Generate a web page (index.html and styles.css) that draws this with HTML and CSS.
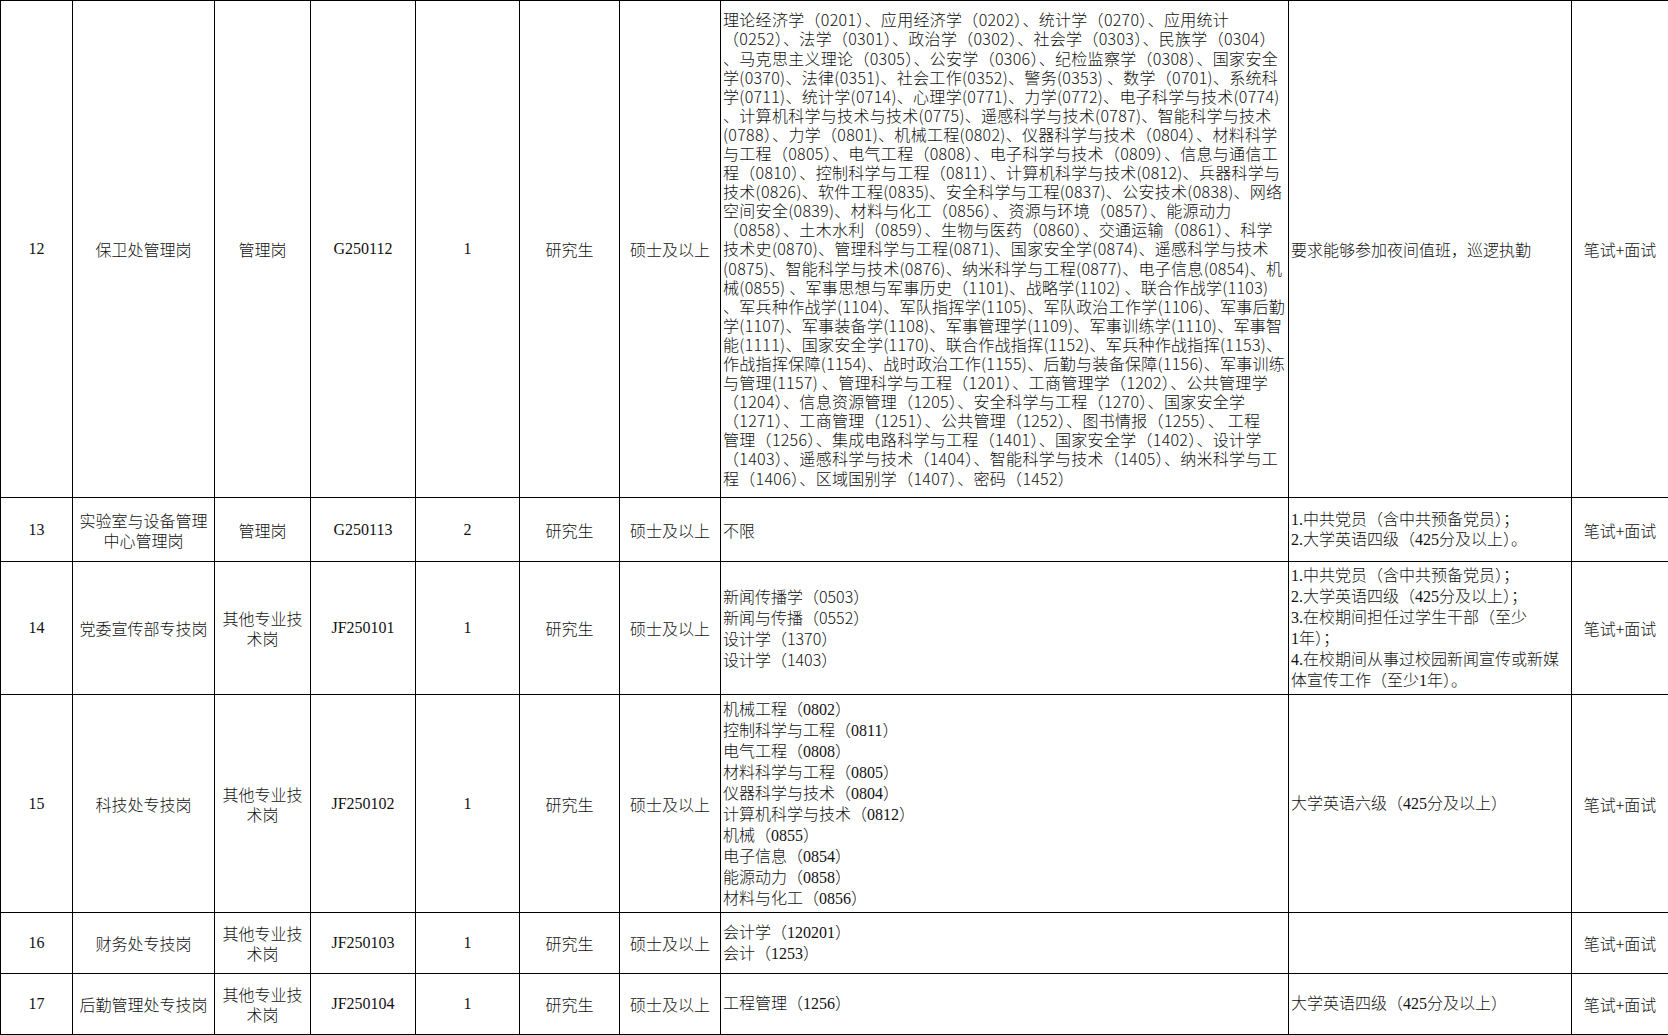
FILE: index.html
```html
<!DOCTYPE html>
<html lang="zh-CN">
<head>
<meta charset="utf-8">
<title>岗位表</title>
<link rel="stylesheet" href="styles.css">
</head>
<body>
<table class="jobs">
  <colgroup>
    <col class="w-no">
    <col class="w-dept">
    <col class="w-type">
    <col class="w-code">
    <col class="w-count">
    <col class="w-edu">
    <col class="w-deg">
    <col class="w-major">
    <col class="w-other">
    <col class="w-exam">
  </colgroup>
  <tbody>
    <tr class="r12">
      <td class="ctr serif">12</td>
      <td class="ctr">保卫处管理岗</td>
      <td class="ctr">管理岗</td>
      <td class="ctr serif">G250112</td>
      <td class="ctr serif">1</td>
      <td class="ctr">研究生</td>
      <td class="ctr">硕士及以上</td>
      <td class="left dense">理论经济学（0201）、应用经济学（0202）、统计学（0270）、应用统计<br>（0252）、法学（0301）、政治学（0302）、社会学（0303）、民族学（0304）<br>、马克思主义理论（0305）、公安学（0306）、纪检监察学（0308）、国家安全<br>学(0370)、法律(0351)、社会工作(0352)、警务(0353) 、数学（0701)、系统科<br>学(0711)、统计学(0714)、心理学(0771)、力学(0772)、电子科学与技术(0774)<br>、计算机科学与技术与技术(0775)、遥感科学与技术(0787)、智能科学与技术<br>(0788）、力学（0801)、机械工程(0802)、仪器科学与技术（0804）、材料科学<br>与工程（0805）、电气工程（0808）、电子科学与技术（0809）、信息与通信工<br>程（0810）、控制科学与工程（0811）、计算机科学与技术(0812)、兵器科学与<br>技术(0826)、软件工程(0835)、安全科学与工程(0837)、公安技术(0838)、网络<br>空间安全(0839)、材料与化工（0856）、资源与环境（0857）、能源动力<br>（0858）、土木水利（0859）、生物与医药（0860）、交通运输（0861）、科学<br>技术史(0870)、管理科学与工程(0871)、国家安全学(0874)、遥感科学与技术<br>(0875)、智能科学与技术(0876)、纳米科学与工程(0877)、电子信息(0854)、机<br>械(0855) 、军事思想与军事历史（1101)、战略学(1102) 、联合作战学(1103)<br>、军兵种作战学(1104)、军队指挥学(1105)、军队政治工作学(1106)、军事后勤<br>学(1107)、军事装备学(1108)、军事管理学(1109)、军事训练学(1110)、军事智<br>能(1111)、国家安全学(1170)、联合作战指挥(1152)、军兵种作战指挥(1153)、<br>作战指挥保障(1154)、战时政治工作(1155)、后勤与装备保障(1156)、军事训练<br>与管理(1157) 、管理科学与工程（1201）、工商管理学（1202）、公共管理学<br>（1204）、信息资源管理（1205）、安全科学与工程（1270）、国家安全学<br>（1271）、工商管理（1251）、公共管理（1252）、图书情报（1255）、 工程<br>管理（1256）、集成电路科学与工程（1401）、国家安全学（1402）、设计学<br>（1403）、遥感科学与技术（1404）、智能科学与技术（1405）、纳米科学与工<br>程（1406）、区域国别学（1407）、密码（1452）</td>
      <td class="left">要求能够参加夜间值班，巡逻执勤</td>
      <td class="ctr">笔试+面试</td>
    </tr>
    <tr class="r13">
      <td class="ctr serif">13</td>
      <td class="ctr">实验室与设备管理中心管理岗</td>
      <td class="ctr">管理岗</td>
      <td class="ctr serif">G250113</td>
      <td class="ctr serif">2</td>
      <td class="ctr">研究生</td>
      <td class="ctr">硕士及以上</td>
      <td class="left">不限</td>
      <td class="left serif">1.中共党员（含中共预备党员）；<br>2.大学英语四级（425分及以上）。</td>
      <td class="ctr">笔试+面试</td>
    </tr>
    <tr class="r14">
      <td class="ctr serif">14</td>
      <td class="ctr">党委宣传部专技岗</td>
      <td class="ctr">其他专业技术岗</td>
      <td class="ctr serif">JF250101</td>
      <td class="ctr serif">1</td>
      <td class="ctr">研究生</td>
      <td class="ctr">硕士及以上</td>
      <td class="left">新闻传播学（0503）<br>新闻与传播（0552）<br>设计学（1370）<br>设计学（1403）</td>
      <td class="left serif">1.中共党员（含中共预备党员）；<br>2.大学英语四级（425分及以上）；<br>3.在校期间担任过学生干部（至少<br>1年）；<br>4.在校期间从事过校园新闻宣传或新媒<br>体宣传工作（至少1年）。</td>
      <td class="ctr">笔试+面试</td>
    </tr>
    <tr class="r15">
      <td class="ctr serif">15</td>
      <td class="ctr">科技处专技岗</td>
      <td class="ctr">其他专业技术岗</td>
      <td class="ctr serif">JF250102</td>
      <td class="ctr serif">1</td>
      <td class="ctr">研究生</td>
      <td class="ctr">硕士及以上</td>
      <td class="left serif">机械工程（0802）<br>控制科学与工程（0811）<br>电气工程（0808）<br>材料科学与工程（0805）<br>仪器科学与技术（0804）<br>计算机科学与技术（0812）<br>机械（0855）<br>电子信息（0854）<br>能源动力（0858）<br>材料与化工（0856）</td>
      <td class="left serif">大学英语六级（425分及以上）</td>
      <td class="ctr">笔试+面试</td>
    </tr>
    <tr class="r16">
      <td class="ctr serif">16</td>
      <td class="ctr">财务处专技岗</td>
      <td class="ctr">其他专业技术岗</td>
      <td class="ctr serif">JF250103</td>
      <td class="ctr serif">1</td>
      <td class="ctr">研究生</td>
      <td class="ctr">硕士及以上</td>
      <td class="left serif">会计学（120201）<br>会计（1253）</td>
      <td class="left"></td>
      <td class="ctr">笔试+面试</td>
    </tr>
    <tr class="r17">
      <td class="ctr serif">17</td>
      <td class="ctr">后勤管理处专技岗</td>
      <td class="ctr">其他专业技术岗</td>
      <td class="ctr serif">JF250104</td>
      <td class="ctr serif">1</td>
      <td class="ctr">研究生</td>
      <td class="ctr">硕士及以上</td>
      <td class="left serif">工程管理（1256）</td>
      <td class="left serif">大学英语四级（425分及以上）</td>
      <td class="ctr">笔试+面试</td>
    </tr>
  </tbody>
</table>
</body>
</html>
```
FILE: styles.css
```css
html, body {
  margin: 0;
  padding: 0;
  background: #ffffff;
  overflow: hidden;
}

.jobs {
  width: 1668px;
  border-collapse: collapse;
  table-layout: fixed;
  font-family: "Noto Sans CJK SC", sans-serif;
  font-size: 16px;
  font-weight: 300;
  line-height: 20px;
  color: #111111;
}

.jobs td {
  border: 1px solid #000000;
  padding: 0 2px;
  vertical-align: middle;
  overflow: hidden;
}

.w-no { width: 72px; }
.w-dept { width: 142px; }
.w-type { width: 96px; }
.w-code { width: 105px; }
.w-count { width: 104px; }
.w-edu { width: 100px; }
.w-deg { width: 101px; }
.w-major { width: 568px; }
.w-other { width: 283px; }
.w-exam { width: 97px; }

.r12 { height: 497px; }
.r13 { height: 64px; }
.r14 { height: 133px; }
.r15 { height: 218px; }
.r16 { height: 61px; }
.r17 { height: 61px; }

.ctr { text-align: center; }
.left { text-align: left; }

.serif {
  font-family: "Liberation Serif", "Noto Sans CJK SC", serif;
}

.r14 .left, .r15 .left, .r16 .left {
  line-height: 21px;
}

.dense {
  line-height: 19.1px;
  letter-spacing: 0.3px;
  white-space: nowrap;
  padding-left: 1px;
}
```
